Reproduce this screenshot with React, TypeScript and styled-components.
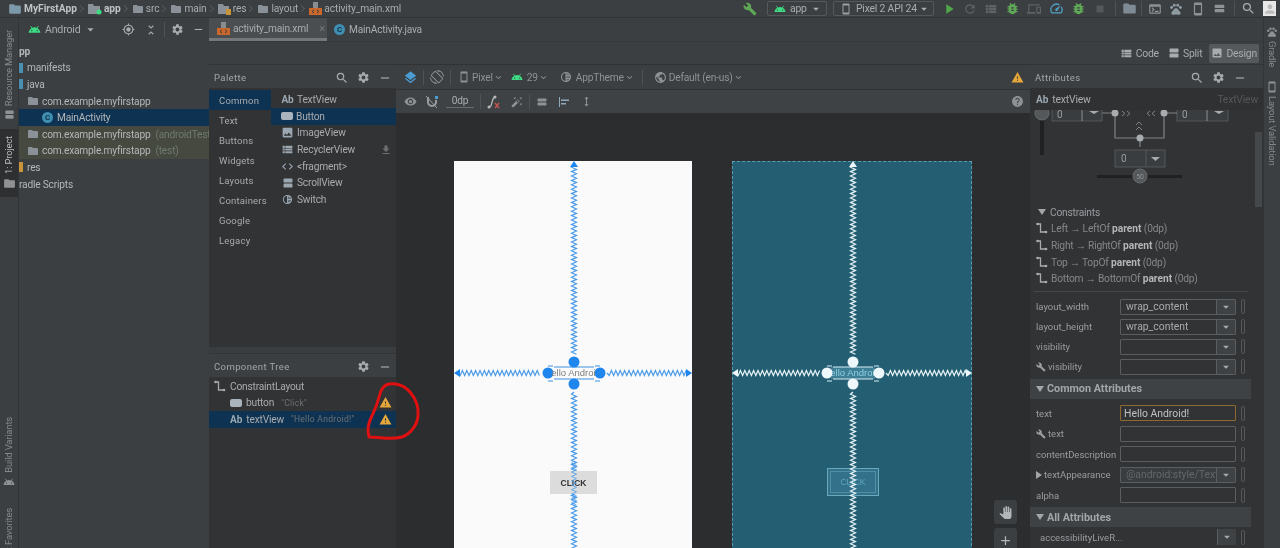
import React from 'react';
import styled, { createGlobalStyle } from 'styled-components';
import {
  MdAdd, MdAndroid, MdArrowDropDown, MdAutoFixHigh, MdBugReport, MdBuild, MdFileDownload, MdFolder,
  MdGpsFixed, MdHelp, MdImage, MdKeyboardArrowDown, MdLayers, MdPanTool, MdPerson, MdPlayArrow, MdPublic,
  MdRemove, MdScreenRotation, MdSearch, MdSettings, MdSmartphone, MdSpeed, MdStop, MdUnfoldLess,
  MdViewList, MdVisibility, MdRefresh, MdDevices, MdTerminal, MdPets, MdCode, MdViewAgenda, MdWarning,
  MdTonality, MdAlignHorizontalLeft, MdHeight, MdViewStream,
} from 'react-icons/md';

const GlobalStyle = createGlobalStyle`
  html, body { margin: 0; padding: 0; background: #3c3f41; }
  * { box-sizing: border-box; }
  svg { flex-shrink: 0; }
`;

const Root = styled.div`
  position: relative;
  width: 1280px;
  height: 548px;
  overflow: hidden;
  display: flex;
  flex-direction: column;
  background: #3c3f41;
  color: #b4b7b9;
  font-family: Roboto, "Noto Sans", sans-serif;
  font-size: 10.2px;
  letter-spacing: -0.2px;
  filter: blur(0.3px);
`;

const TopBar = styled.div`
  height: 18px;
  flex: none;
  display: flex;
  align-items: center;
  justify-content: space-between;
  padding: 0 0 0 8px;
  border-bottom: 1px solid #323232;
  white-space: nowrap;
`;
const Crumbs = styled.div`
  display: flex;
  align-items: center;
  height: 100%;
`;
const Crumb = styled.span<{ $bold?: boolean }>`
  display: inline-flex;
  align-items: center;
  gap: 2px;
  font-weight: ${p => (p.$bold ? 700 : 400)};
  letter-spacing: ${p => (p.$bold ? '0' : '-0.1px')};
  color: ${p => (p.$bold ? '#bfc2c4' : '#a9acae')};
`;
const CrumbSep = styled.span`
  width: 5px;
  height: 5px;
  margin: 0 5px 0 1px;
  border-top: 1px solid #55585a;
  border-right: 1px solid #55585a;
  transform: rotate(45deg);
`;
const RunTools = styled.div`
  display: flex;
  align-items: center;
  height: 100%;
  padding-right: 4px;
`;
const Slot = styled.span<{ $w: number; $c?: string }>`
  width: ${p => p.$w}px;
  display: inline-flex;
  justify-content: center;
  align-items: center;
  color: ${p => p.$c ?? '#5f6365'};
`;
const Combo = styled.div<{ $w: number; $mr: number }>`
  width: ${p => p.$w}px;
  height: 15px;
  margin-right: ${p => p.$mr}px;
  display: flex;
  align-items: center;
  justify-content: space-between;
  padding: 0 3px 0 6px;
  border: 1px solid #55585a;
  border-radius: 2px;
  color: #a9acae;
  font-size: 10.4px;
`;
const ComboLabel = styled.span`
  display: inline-flex;
  align-items: center;
  gap: 4px;
`;
const UserBox = styled.span`
  width: 13px;
  height: 15px;
  margin-left: 7px;
  display: inline-flex;
  align-items: flex-end;
  justify-content: center;
  background: #e8e8e8;
  color: #fff;
  overflow: hidden;
`;
const VLine = styled.span<{ $h?: number; $mx?: number }>`
  width: 1px;
  height: ${p => p.$h ?? 15}px;
  margin: 0 ${p => p.$mx ?? 6}px;
  background: #505355;
  flex: none;
`;

const Body = styled.div`
  flex: 1;
  min-height: 0;
  display: flex;
`;

const Rail = styled.div<{ $right?: boolean }>`
  width: ${p => (p.$right ? 17 : 19)}px;
  flex: none;
  display: flex;
  flex-direction: column;
  align-items: center;
  background: #3c3f41;
  border-${p => (p.$right ? 'left' : 'right')}: 1px solid #323436;
  overflow: hidden;
`;
const RailTab = styled.div<{ $active?: boolean; $right?: boolean; $mt?: number; $h?: number; $pt?: number }>`
  width: 100%;
  flex: none;
  height: ${p => (p.$h ? `${p.$h}px` : 'auto')};
  margin-top: ${p => p.$mt ?? 0}px;
  padding-top: ${p => p.$pt ?? 0}px;
  display: flex;
  flex-direction: ${p => (p.$right ? 'column-reverse' : 'column')};
  align-items: center;
  justify-content: ${p => (p.$active ? 'center' : p.$right ? 'flex-end' : 'flex-start')};
  gap: 3px;
  background: ${p => (p.$active ? '#2d2f31' : 'transparent')};
  color: #8f9294;
`;
const RailText = styled.span<{ $right?: boolean; $active?: boolean }>`
  writing-mode: vertical-rl;
  transform: ${p => (p.$right ? 'none' : 'rotate(180deg)')};
  white-space: nowrap;
  font-size: 9.5px;
  letter-spacing: -0.2px;
  line-height: 12px;
  color: ${p => (p.$active ? '#b8bbbd' : '#85888a')};
`;

const ProjectPane = styled.div`
  width: 190px;
  flex: none;
  display: flex;
  flex-direction: column;
  overflow: hidden;
`;
const PaneHead = styled.div`
  height: 23px;
  flex: none;
  display: flex;
  align-items: center;
  padding-left: 9px;
  color: #a9acae;
`;
const PaneTitle = styled.span`
  margin-left: 4px;
  font-size: 10.6px;
`;
const TreeRow = styled.div<{ $indent?: number; $bg?: string }>`
  height: 16.6px;
  display: flex;
  align-items: center;
  gap: 3px;
  padding-left: ${p => p.$indent ?? 0}px;
  background: ${p => p.$bg ?? 'transparent'};
  white-space: nowrap;
  color: #b4b7b9;
  overflow: hidden;
`;
const Muted = styled.span<{ $c?: string }>`
  margin-left: 2px;
  color: ${p => p.$c ?? '#6f7a6d'};
`;
const ClassDot = styled.span`
  width: 11px;
  height: 11px;
  margin-right: 1px;
  flex: none;
  border-radius: 50%;
  background: #3f8fb3;
  color: #123246;
  font-size: 8px;
  font-weight: 700;
  line-height: 11px;
  text-align: center;
`;
const Stub = styled.span<{ $c: string }>`
  width: 4px;
  height: 10px;
  margin-right: 1px;
  flex: none;
  background: ${p => p.$c};
`;

const Editor = styled.div`
  flex: 1;
  min-width: 0;
  display: flex;
  flex-direction: column;
`;
const Tabs = styled.div`
  height: 23px;
  flex: none;
  display: flex;
`;
const Tab = styled.div<{ $active?: boolean }>`
  width: ${p => (p.$active ? 118 : 120)}px;
  display: flex;
  align-items: center;
  gap: 3px;
  padding: 0 0 0 ${p => (p.$active ? 8 : 7)}px;
  background: ${p => (p.$active ? '#4b4e50' : 'transparent')};
  border-bottom: ${p => (p.$active ? '3px solid #74787a' : 'none')};
  color: #a9acae;
`;
const Close = styled.span`
  margin-left: 8px;
  color: #73777a;
  font-size: 11px;
`;
const ModeRow = styled.div`
  height: 23px;
  flex: none;
  display: flex;
  align-items: center;
  justify-content: flex-end;
  gap: 5px;
  padding-right: 4px;
  border-top: 1px solid #36383a;
`;
const Mode = styled.span<{ $active?: boolean }>`
  height: 19px;
  display: inline-flex;
  align-items: center;
  gap: 3px;
  padding: 0 2px;
  border-radius: 2px;
  background: ${p => (p.$active ? '#55595b' : 'transparent')};
  color: #a9acae;
  font-size: 10.4px;
`;

const DesignArea = styled.div`
  flex: 1;
  min-height: 0;
  display: flex;
`;
const LeftColumn = styled.div`
  width: 187px;
  flex: none;
  display: flex;
  flex-direction: column;
  background: #313335;
`;
const SectionHead = styled.div<{ $h?: number }>`
  height: ${p => p.$h ?? 24}px;
  flex: none;
  display: flex;
  align-items: center;
  justify-content: space-between;
  padding: 2px 4px 0 5px;
  background: #3c3f41;
  border-top: 1px solid #323436;
  font-size: 9.5px;
  letter-spacing: 0.4px;
  color: #a3a6a8;
`;
const HeadIcons = styled.span`
  display: inline-flex;
  align-items: center;
  gap: 8px;
  color: #a9acae;
`;
const PaletteBody = styled.div`
  flex: 1;
  display: grid;
  grid-template-columns: 62px 1fr;
  align-content: start;
`;
const CategoryList = styled.div`
  padding-top: 2px;
`;
const WidgetList = styled.div`
  padding-top: 3.5px;
`;
const Category = styled.div<{ $active?: boolean }>`
  height: 20px;
  line-height: 21px;
  padding-left: 10px;
  font-size: 9.5px;
  letter-spacing: 0.2px;
  background: ${p => (p.$active ? '#0d3252' : 'transparent')};
  color: #a9acae;
`;
const Widget = styled.div<{ $active?: boolean }>`
  height: 16.6px;
  display: flex;
  align-items: center;
  gap: 3px;
  padding: 0 4px 0 10px;
  background: ${p => (p.$active ? '#0d3252' : 'transparent')};
  color: #a9acae;
  white-space: nowrap;
`;
const WidgetGlyph = styled.span`
  width: 13px;
  flex: none;
  display: inline-flex;
  justify-content: center;
  align-items: center;
  color: #9aa7b1;
  font-weight: 700;
  font-size: 10px;
`;
const ButtonGlyph = styled.span`
  width: 12px;
  height: 8px;
  flex: none;
  border-radius: 2px;
  background: #a9b4bd;
`;
const Grow = styled.span`
  flex: 1;
`;
const TreePane = styled.div`
  height: 201px;
  flex: none;
  display: flex;
  flex-direction: column;
`;
const TreeStrip = styled.div`
  height: 6px;
  flex: none;
  background: #3a3d3f;
`;
const CompList = styled.div`
  padding-top: 1px;
`;
const CompRow = styled.div<{ $active?: boolean; $indent: number }>`
  height: 16.6px;
  display: flex;
  align-items: center;
  gap: 4px;
  padding: 0 4px 0 ${p => p.$indent}px;
  background: ${p => (p.$active ? '#0d3252' : 'transparent')};
  white-space: nowrap;
  color: #a9acae;
`;
const CompHint = styled.span`
  margin-left: 3px;
  font-size: 8.5px;
  letter-spacing: 0.3px;
  color: #6e7174;
`;

const CanvasColumn = styled.div`
  flex: 1;
  min-width: 0;
  display: flex;
  flex-direction: column;
  background: #2b2d2f;
`;
const CanvasBar = styled.div<{ $h: number; $bg: string }>`
  height: ${p => p.$h}px;
  flex: none;
  display: flex;
  align-items: center;
  padding: 0 6px;
  background: ${p => p.$bg};
  border-top: 1px solid #303234;
  color: #8f9294;
  font-size: 10.2px;
  white-space: nowrap;
`;
const BarItem = styled.span<{ $w?: number; $c?: string; $ml?: number }>`
  ${p => (p.$w ? `width: ${p.$w}px;` : '')}
  margin-left: ${p => p.$ml ?? 0}px;
  flex: none;
  display: inline-flex;
  align-items: center;
  justify-content: center;
  gap: 2px;
  color: ${p => p.$c ?? '#8f9294'};
`;
const Dp = styled.span`
  width: 28px;
  margin-left: 3px;
  text-align: center;
  border-bottom: 1px solid #6a6d6f;
  color: #a9acae;
  line-height: 12px;
`;
const Stage = styled.div`
  position: relative;
  flex: 1;
  overflow: hidden;
`;
const Device = styled.div<{ $left: number; $w: number; $blue?: boolean }>`
  position: absolute;
  left: ${p => p.$left}px;
  top: 48px;
  width: ${p => p.$w}px;
  height: 400px;
  background: ${p => (p.$blue ? '#245e73' : '#fafafa')};
  ${p => (p.$blue ? 'outline: 1px dashed #5c9bb0; outline-offset: -1px;' : '')}
`;
const Lines = styled.svg`
  position: absolute;
  inset: 0;
`;
const HelloBox = styled.div<{ $blue?: boolean }>`
  position: absolute;
  left: ${p => (p.$blue ? 99 : 98)}px;
  top: 206px;
  width: 44px;
  height: 12px;
  overflow: hidden;
  display: flex;
  justify-content: center;
  white-space: nowrap;
  font-family: "Liberation Sans", sans-serif;
  font-size: 9.5px;
  letter-spacing: 0;
  line-height: 12px;
  background: ${p => (p.$blue ? '#3f7f96' : 'transparent')};
  color: ${p => (p.$blue ? '#8fd0e3' : '#7d7d7d')};
`;
const ClickButton = styled.div<{ $blue?: boolean }>`
  position: absolute;
  left: ${p => (p.$blue ? 95 : 96)}px;
  top: ${p => (p.$blue ? 307 : 310)}px;
  width: ${p => (p.$blue ? 52 : 47)}px;
  height: ${p => (p.$blue ? 28 : 23)}px;
  display: flex;
  align-items: center;
  justify-content: center;
  font-family: "Liberation Sans", sans-serif;
  font-size: 8.5px;
  letter-spacing: 0;
  font-weight: ${p => (p.$blue ? 400 : 700)};
  background: ${p => (p.$blue ? '#33708a' : '#dcdcdc')};
  border: ${p => (p.$blue ? '1px solid #6ba8bb' : 'none')};
  box-shadow: ${p => (p.$blue ? 'inset 0 0 0 2px #33708a, inset 0 0 0 3px #4f90a5' : 'none')};
  color: ${p => (p.$blue ? '#5fa8bd' : '#333')};
`;
const FloatBtn = styled.div<{ $top: number }>`
  position: absolute;
  right: 13px;
  top: ${p => p.$top}px;
  width: 23px;
  height: 24px;
  display: flex;
  align-items: center;
  justify-content: center;
  border-radius: 3px;
  background: #3c3f41;
  color: #b4b7b9;
`;

const AttrPane = styled.div`
  position: relative;
  width: 233px;
  flex: none;
  display: flex;
  flex-direction: column;
  background: #313335;
  overflow: hidden;
`;
const AttrIcons = styled(HeadIcons)`
  margin-right: 12px;
`;
const SelectedHead = styled.div`
  height: 22px;
  flex: none;
  display: flex;
  align-items: center;
  justify-content: space-between;
  padding: 0 5px 0 6px;
  background: #2f3133;
  color: #a9acae;
  font-size: 10.4px;
`;
const AbGlyph = styled.b<{ $flush?: boolean }>`
  margin-right: ${p => (p.$flush ? 0 : 4)}px;
  font-size: 10px;
  letter-spacing: 0;
  color: #9aa7b1;
`;
const SelectedType = styled.span`
  color: #55585a;
  font-size: 10.4px;
`;
const WidgetArea = styled.svg`
  flex: none;
  display: block;
`;
const ConstraintHead = styled.div`
  height: 16.6px;
  display: flex;
  align-items: center;
  gap: 4px;
  padding-left: 8px;
  color: #9a9da0;
`;
const ConstraintRow = styled.div`
  height: 16.6px;
  display: flex;
  align-items: center;
  gap: 3px;
  padding-left: 6px;
  color: #85888a;
  white-space: nowrap;
`;
const Parent = styled.b`
  letter-spacing: 0;
  color: #b4b7b9;
`;
const Rule = styled.div`
  height: 1px;
  width: 214px;
  margin: 4px 0 5px 4px;
  flex: none;
  background: #45484a;
`;
const AttrRow = styled.div<{ $h?: number; $mt?: number }>`
  height: ${p => p.$h ?? 20}px;
  margin-top: ${p => p.$mt ?? 0}px;
  flex: none;
  display: grid;
  grid-template-columns: 84px 116px 14px;
  align-items: center;
  padding-left: 6px;
  color: #9a9da0;
  letter-spacing: 0;
  font-size: 9.5px;
  white-space: nowrap;
`;
const AttrLabel = styled.span<{ $indent?: number }>`
  display: inline-flex;
  align-items: center;
  gap: 2px;
  margin-left: ${p => p.$indent ?? 0}px;
`;
const Field = styled.div<{ $focus?: boolean; $dim?: boolean; $bare?: boolean }>`
  height: 16px;
  display: flex;
  align-items: center;
  justify-content: space-between;
  padding-left: ${p => (p.$focus ? 3 : 5)}px;
  border: ${p => (p.$focus ? '1.5px solid #8c6a32' : p.$bare ? 'none' : '1px solid #5b5e60')};
  border-radius: 1px;
  color: ${p => (p.$dim ? '#646769' : p.$focus ? '#bfc2c4' : '#a9acae')};
  font-size: 10.4px;
  overflow: hidden;
  background: ${p => (p.$dim ? '#3a3d3f' : 'transparent')};
`;
const FieldText = styled.span`
  flex: 1;
  min-width: 0;
  overflow: hidden;
`;
const FieldArrow = styled.span`
  width: 19px;
  height: 100%;
  flex: none;
  display: flex;
  align-items: center;
  justify-content: center;
  background: #3f4244;
  border-left: 1px solid #5b5e60;
  color: #a9acae;
`;
const Bracket = styled.span`
  width: 4px;
  height: 15px;
  margin-left: 5px;
  border: 1px solid #55585a;
  border-radius: 2px;
`;
const SectionBar = styled.div`
  height: 20px;
  width: 221px;
  flex: none;
  display: flex;
  align-items: center;
  gap: 3px;
  padding-left: 6px;
  margin-top: 2px;
  background: #3f4244;
  color: #a3a6a8;
  font-weight: 700;
  letter-spacing: 0;
  font-size: 10.8px;
`;
const Triangle = styled.span<{ $right?: boolean }>`
  width: 0;
  height: 0;
  flex: none;
  ${p =>
    p.$right
      ? 'border-top: 4px solid transparent; border-bottom: 4px solid transparent; border-left: 6px solid #a3a6a8;'
      : 'border-left: 4px solid transparent; border-right: 4px solid transparent; border-top: 6px solid #a3a6a8;'}
`;
const Scrollbar = styled.div`
  position: absolute;
  left: 225px;
  top: 68px;
  width: 7px;
  height: 75px;
  background: #45484a;
`;
const RedCircle = styled.svg`
  position: absolute;
  left: 0;
  top: 0;
  pointer-events: none;
`;

// zigzag between two points, for the constraint springs of the blueprint
const zig = (x1: number, y1: number, x2: number, y2: number) => {
  const len = Math.hypot(x2 - x1, y2 - y1);
  const ux = (x2 - x1) / len;
  const uy = (y2 - y1) / len;
  let d = `M${x1} ${y1}`;
  const n = Math.floor(len / 2.2);
  for (let i = 1; i <= n; i++) {
    const t = i * 2.2;
    const s = i % 2 ? 2.5 : -2.5;
    d += `L${(x1 + ux * t - uy * s).toFixed(1)} ${(y1 + uy * t + ux * s).toFixed(1)}`;
  }
  return d;
};

const ConstraintIcon = ({ c = '#a9acae' }: { c?: string }) => (
  <svg width="12" height="13" viewBox="0 0 12 13">
    <path d="M1 2h3.5v8H10" fill="none" stroke={c} strokeWidth="1.3" />
    <circle cx="1.5" cy="2" r="1.3" fill={c} />
    <circle cx="10" cy="10" r="1.3" fill={c} />
  </svg>
);

const XmlIcon = () => (
  <svg width="13" height="13" viewBox="0 0 13 13">
    <path d="M4 0h5v6H4z" fill="#8b8e90" />
    <path d="M0 6h13v7H0z" fill="#c9682a" />
    <path d="M5 8l-2 1.5L5 11M8 8l2 1.5L8 11" fill="none" stroke="#3c3f41" strokeWidth="1" />
  </svg>
);

const ResFolder = () => (
  <svg width="13" height="12" viewBox="0 0 13 12">
    <path d="M0 1h5l1 2h5v8H0z" fill="#8a9199" />
    <path d="M8 6h5v6H8z" fill="#c9953a" />
  </svg>
);

const AppFolder = () => (
  <svg width="14" height="12" viewBox="0 0 14 12">
    <path d="M0 1h5l1 2h6v8H0z" fill="#8a9199" />
    <circle cx="11" cy="9" r="2.500" fill="#3ddc84" />
  </svg>
);

const MagnetIcon = () => (
  <svg width="14" height="14" viewBox="0 0 14 14">
    <path d="M3 2v5a4 4 0 0 0 8 0V5" fill="none" stroke="#9a9da0" strokeWidth="2" />
    <path d="M1 1l11 12" stroke="#9a9da0" strokeWidth="1" />
    <path d="M10 1h3v3h-3z" fill="#4a9bd1" />
  </svg>
);

const NoPathIcon = () => (
  <svg width="14" height="14" viewBox="0 0 14 14">
    <path d="M2 12c4 0 2-9 6-10" fill="none" stroke="#b4b7b9" strokeWidth="1.300" />
    <circle cx="2" cy="12" r="1.500" fill="#b4b7b9" />
    <circle cx="8" cy="2" r="1.500" fill="#b4b7b9" />
    <path d="M8 8l4 5M12 8l-4 5" stroke="#c75450" strokeWidth="1.300" />
  </svg>
);

const Warn = ({ size = 13 }: { size?: number }) => <MdWarning size={size} color="#e5a63a" />;

const Blueprint = ({ cx, w, stroke, blue }: { cx: number; w: number; stroke: string; blue?: boolean }) => {
  const cy = 212;
  const dot = blue ? '#eef8fb' : '#1f86ee';
  const handle = blue ? '#d9eef5' : '#3b8fe0';
  return (
    <Lines width={w} height={400} viewBox={`0 0 ${w} 400`}>
      <path d={zig(cx, 4, cx, cy - 18)} fill="none" stroke={stroke} strokeWidth="1.2" />
      <path d={zig(cx, cy + 19, cx, 390)} fill="none" stroke={stroke} strokeWidth="1.2" />
      <path d={zig(4, cy, cx - 33, cy)} fill="none" stroke={stroke} strokeWidth="1.2" />
      <path d={zig(cx + 33, cy, w - 4, cy)} fill="none" stroke={stroke} strokeWidth="1.2" />
      <path d={`M${cx} 0l-4 6h8z`} fill={dot} />
      <path d={`M0 ${cy}l6 -4v8z`} fill={dot} />
      <path d={`M${w} ${cy}l-6 -4v8z`} fill={dot} />
      <path
        d={`M${cx - 26} ${cy - 7}h5M${cx + 21} ${cy - 7}h5M${cx - 26} ${cy + 8}h5M${cx + 21} ${cy + 8}h5M${cx - 20} ${cy - 6}h40M${cx - 20} ${cy + 6}h40`}
        fill="none"
        stroke={handle}
        strokeWidth="1.200"
      />
      <circle cx={cx} cy={cy - 11} r="5.5" fill={dot} />
      <circle cx={cx} cy={cy + 11} r="5.5" fill={dot} />
      <circle cx={cx - 26} cy={cy} r="5.5" fill={dot} />
      <circle cx={cx + 26} cy={cy} r="5.5" fill={dot} />
    </Lines>
  );
};

const dropArrow = <FieldArrow><MdArrowDropDown size={14} /></FieldArrow>;

const App: React.FC = () => (
  <Root>
    <GlobalStyle />
    <TopBar>
      <Crumbs>
        <Crumb $bold><MdFolder size={14} color="#7d98a8" />MyFirstApp</Crumb><CrumbSep />
        <Crumb $bold><AppFolder />app</Crumb><CrumbSep />
        <Crumb><MdFolder size={12} color="#8a9199" />src</Crumb><CrumbSep />
        <Crumb><MdFolder size={12} color="#8a9199" />main</Crumb><CrumbSep />
        <Crumb><ResFolder />res</Crumb><CrumbSep />
        <Crumb><MdFolder size={12} color="#8a9199" />layout</Crumb><CrumbSep />
        <Crumb><XmlIcon />activity_main.xml</Crumb>
      </Crumbs>
      <RunTools>
        <Slot $w={34} $c="#5fa857"><MdBuild size={14} /></Slot>
        <Combo $w={60} $mr={6}>
          <ComboLabel><MdAndroid size={12} color="#3ddc84" />app</ComboLabel>
          <MdArrowDropDown size={14} />
        </Combo>
        <Combo $w={101} $mr={4}>
          <ComboLabel><MdSmartphone size={12} color="#9a9da0" />Pixel 2 API 24</ComboLabel>
          <MdArrowDropDown size={14} />
        </Combo>
        <Slot $w={21} $c="#4ea84a"><MdPlayArrow size={16} /></Slot>
        <Slot $w={21}><MdRefresh size={14} /></Slot>
        <Slot $w={22}><MdViewList size={14} /></Slot>
        <Slot $w={21} $c="#5fa857"><MdBugReport size={15} /></Slot>
        <Slot $w={22}><MdDevices size={14} /></Slot>
        <Slot $w={22} $c="#4f9fc4"><MdSpeed size={15} /></Slot>
        <Slot $w={22} $c="#5fa857"><MdBugReport size={15} /></Slot>
        <Slot $w={22} $c="#55585a"><MdStop size={14} /></Slot>
        <VLine $mx={4} />
        <Slot $w={18} $c="#7e8a94"><MdFolder size={15} /></Slot>
        <VLine $mx={3} />
        <Slot $w={20} $c="#8f9294"><MdTerminal size={14} /></Slot>
        <Slot $w={22} $c="#8f9ba3"><MdPets size={14} /></Slot>
        <Slot $w={22} $c="#8f9294"><MdSmartphone size={14} /></Slot>
        <Slot $w={20} $c="#8f9294"><MdViewStream size={13} /></Slot>
        <VLine $mx={5} />
        <Slot $w={16} $c="#a9acae"><MdSearch size={15} /></Slot>
        <UserBox><MdPerson size={14} color="#bbb" /></UserBox>
      </RunTools>
    </TopBar>

    <Body>
      <Rail>
        <RailTab $h={111} $pt={12}>
          <RailText>Resource Manager</RailText>
          <MdViewAgenda size={11} />
        </RailTab>
        <RailTab $active $h={68}>
          <RailText $active>1: Project</RailText>
          <MdFolder size={13} />
        </RailTab>
        <RailTab $mt={220}>
          <RailText>Build Variants</RailText>
          <MdAndroid size={12} />
        </RailTab>
        <RailTab $mt={20}>
          <RailText>2: Favorites</RailText>
        </RailTab>
      </Rail>

      <ProjectPane>
        <PaneHead>
          <MdAndroid size={13} color="#3ddc84" />
          <PaneTitle>Android</PaneTitle>
          <MdArrowDropDown size={15} style={{ marginLeft: 3 }} />
          <Grow />
          <MdGpsFixed size={13} />
          <MdUnfoldLess size={14} style={{ marginLeft: 9 }} />
          <VLine $mx={6} />
          <MdSettings size={13} />
          <MdRemove size={13} style={{ marginLeft: 8, marginRight: 4 }} />
        </PaneHead>
        <TreeRow style={{ marginTop: 2 }}><b>pp</b></TreeRow>
        <TreeRow><Stub $c="#4a8fb0" />manifests</TreeRow>
        <TreeRow><Stub $c="#4a8fb0" />java</TreeRow>
        <TreeRow $indent={8}><MdFolder size={12} color="#8a9199" />com.example.myfirstapp</TreeRow>
        <TreeRow $indent={23} $bg="#0d3252"><ClassDot>C</ClassDot>MainActivity</TreeRow>
        <TreeRow $indent={8} $bg="#45493f">
          <MdFolder size={12} color="#8a9199" />com.example.myfirstapp<Muted>(androidTest)</Muted>
        </TreeRow>
        <TreeRow $indent={8} $bg="#45493f">
          <MdFolder size={12} color="#8a9199" />com.example.myfirstapp<Muted>(test)</Muted>
        </TreeRow>
        <TreeRow><Stub $c="#c9953a" />res</TreeRow>
        <TreeRow>radle Scripts</TreeRow>
      </ProjectPane>

      <Editor>
        <Tabs>
          <Tab $active><XmlIcon />activity_main.xml<Close>×</Close></Tab>
          <Tab><ClassDot>C</ClassDot>MainActivity.java</Tab>
        </Tabs>
        <ModeRow>
          <Mode><MdViewList size={13} />Code</Mode>
          <Mode><MdViewAgenda size={12} />Split</Mode>
          <Mode $active><MdImage size={12} />Design</Mode>
        </ModeRow>
        <DesignArea>
          <LeftColumn>
            <SectionHead>
              Palette
              <HeadIcons><MdSearch size={14} /><MdSettings size={13} /><MdRemove size={14} /></HeadIcons>
            </SectionHead>
            <PaletteBody>
              <CategoryList>
                <Category $active>Common</Category>
                <Category>Text</Category>
                <Category>Buttons</Category>
                <Category>Widgets</Category>
                <Category>Layouts</Category>
                <Category>Containers</Category>
                <Category>Google</Category>
                <Category>Legacy</Category>
              </CategoryList>
              <WidgetList>
                <Widget><WidgetGlyph>Ab</WidgetGlyph>TextView</Widget>
                <Widget $active><ButtonGlyph />Button</Widget>
                <Widget><WidgetGlyph><MdImage size={13} /></WidgetGlyph>ImageView</Widget>
                <Widget><WidgetGlyph><MdViewList size={13} /></WidgetGlyph>RecyclerView<Grow /><MdFileDownload size={12} color="#6e7174" /></Widget>
                <Widget><WidgetGlyph><MdCode size={13} /></WidgetGlyph>&lt;fragment&gt;</Widget>
                <Widget><WidgetGlyph><MdViewAgenda size={12} /></WidgetGlyph>ScrollView</Widget>
                <Widget><WidgetGlyph><MdTonality size={11} /></WidgetGlyph>Switch</Widget>
              </WidgetList>
            </PaletteBody>
            <TreePane>
              <TreeStrip />
              <SectionHead $h={24}>
                Component Tree
                <HeadIcons><MdSettings size={13} /><MdRemove size={14} /></HeadIcons>
              </SectionHead>
              <CompList>
                <CompRow $indent={5}><ConstraintIcon /><span>ConstraintLayout</span></CompRow>
                <CompRow $indent={21}>
                  <ButtonGlyph />button<CompHint>"Click"</CompHint><Grow /><Warn />
                </CompRow>
                <CompRow $active $indent={21}>
                  <AbGlyph $flush>Ab</AbGlyph>textView<CompHint>"Hello Android!"</CompHint><Grow /><Warn />
                </CompRow>
              </CompList>
            </TreePane>
          </LeftColumn>

          <CanvasColumn>
            <CanvasBar $h={25} $bg="#3c3f41">
              <BarItem $w={16} $c="#4a9bd1"><MdLayers size={15} /></BarItem>
              <VLine $mx={5} />
              <BarItem $w={16}><MdScreenRotation size={14} /></BarItem>
              <VLine $mx={5} />
              <BarItem $w={16}><MdSmartphone size={12} /></BarItem>
              Pixel<MdKeyboardArrowDown size={11} />
              <BarItem $w={19} $c="#3ddc84" $ml={4}><MdAndroid size={12} /></BarItem>
              29<MdKeyboardArrowDown size={11} />
              <BarItem $w={20} $ml={7}><MdTonality size={12} /></BarItem>
              AppTheme<MdKeyboardArrowDown size={11} />
              <VLine $mx={7} />
              <BarItem $w={16} $ml={3}><MdPublic size={13} /></BarItem>
              Default (en-us)<MdKeyboardArrowDown size={11} />
              <Grow />
              <Warn />
            </CanvasBar>
            <CanvasBar $h={24} $bg="#3f4244">
              <BarItem $w={16}><MdVisibility size={13} /></BarItem>
              <BarItem $w={22} $ml={3}><MagnetIcon /></BarItem>
              <Dp>0dp</Dp>
              <VLine $mx={6} />
              <BarItem $w={14}><NoPathIcon /></BarItem>
              <BarItem $w={16} $ml={8}><MdAutoFixHigh size={12} /></BarItem>
              <VLine $mx={4} />
              <BarItem $w={16}><MdViewStream size={12} /></BarItem>
              <BarItem $w={16} $ml={6}><MdAlignHorizontalLeft size={12} color="#8fa9bb" /></BarItem>
              <BarItem $w={16} $ml={6}><MdHeight size={13} /></BarItem>
              <Grow />
              <MdHelp size={13} />
            </CanvasBar>
            <Stage>
              <Device $left={58} $w={238}>
                <Blueprint cx={120} w={238} stroke="#4b9be8" />
                <HelloBox>Hello Android!</HelloBox>
                <ClickButton>CLICK</ClickButton>
                <Lines width={238} height={400}>
                  <path d={zig(120, 300, 120, 345)} fill="none" stroke="#4b9be8" strokeWidth="1" opacity="0.8" />
                </Lines>
              </Device>
              <Device $left={336} $w={240} $blue>
                <ClickButton $blue>CLICK</ClickButton>
                <HelloBox $blue>Hello Android!</HelloBox>
                <Blueprint cx={121} w={240} stroke="#e6f3f7" blue />
              </Device>
              <FloatBtn $top={387}><MdPanTool size={13} /></FloatBtn>
              <FloatBtn $top={415}><MdAdd size={15} /></FloatBtn>
            </Stage>
          </CanvasColumn>

          <AttrPane>
            <SectionHead>
              Attributes
              <AttrIcons><MdSearch size={14} /><MdSettings size={13} /><MdRemove size={14} /></AttrIcons>
            </SectionHead>
            <SelectedHead>
              <span><AbGlyph>Ab</AbGlyph>textView</span>
              <SelectedType>TextView</SelectedType>
            </SelectedHead>
            <WidgetArea width="233" height="94" viewBox="0 0 233 94">
              <rect x="10" y="0" width="4" height="45" fill="#1f2122" />
              <circle cx="12" cy="3" r="7" fill="#55585a" stroke="#6a6d6f" />
              <rect x="22" y="-4" width="50" height="15" fill="#3a3d3f" stroke="#55585a" />
              <rect x="147" y="-4" width="51" height="15" fill="#3a3d3f" stroke="#55585a" />
              <text x="27" y="8" fontSize="10" fill="#9a9da0">0</text>
              <text x="152" y="8" fontSize="10" fill="#9a9da0">0</text>
              <path d="M72 3h13v25h49V3h13M110 28v9M52 -4v15M177 -4v15" fill="none" stroke="#808386" strokeWidth="1.2" />
              <path d="M59 1l5 3 5 -3M184 1l5 3 5 -3" fill="#a9acae" />
              <circle cx="85" cy="3" r="3.5" fill="#a9acae" />
              <circle cx="134" cy="3" r="3.5" fill="#a9acae" />
              <circle cx="110" cy="28" r="3.5" fill="#a9acae" />
              <path d="M92 1l3 2.5-3 2.5M97 1l3 2.5-3 2.5M125 1l-3 2.5 3 2.5M120 1l-3 2.5 3 2.5M106 15l3-3 3 3M106 20l3-3 3 3" fill="none" stroke="#808386" />
              <rect x="85" y="40" width="50" height="17" fill="#3a3d3f" stroke="#55585a" />
              <path d="M116 40v17" stroke="#55585a" />
              <text x="91" y="52" fontSize="10" fill="#9a9da0">0</text>
              <path d="M121 47h9l-4.500 4z" fill="#a9acae" />
              <rect x="67" y="65" width="85" height="3" fill="#1f2122" />
              <circle cx="110" cy="66" r="7" fill="#55585a" stroke="#6a6d6f" />
              <text x="110" y="69" fontSize="7" fill="#8f9294" textAnchor="middle">50</text>
            </WidgetArea>
            <ConstraintHead><Triangle />Constraints</ConstraintHead>
            <ConstraintRow><ConstraintIcon /><span>Left → LeftOf <Parent>parent</Parent> (0dp)</span></ConstraintRow>
            <ConstraintRow><ConstraintIcon /><span>Right → RightOf <Parent>parent</Parent> (0dp)</span></ConstraintRow>
            <ConstraintRow><ConstraintIcon /><span>Top → TopOf <Parent>parent</Parent> (0dp)</span></ConstraintRow>
            <ConstraintRow><ConstraintIcon /><span>Bottom → BottomOf <Parent>parent</Parent> (0dp)</span></ConstraintRow>
            <Rule />
            <AttrRow>
              <AttrLabel>layout_width</AttrLabel>
              <Field><FieldText>wrap_content</FieldText>{dropArrow}</Field>
              <Bracket />
            </AttrRow>
            <AttrRow>
              <AttrLabel>layout_height</AttrLabel>
              <Field><FieldText>wrap_content</FieldText>{dropArrow}</Field>
              <Bracket />
            </AttrRow>
            <AttrRow>
              <AttrLabel>visibility</AttrLabel>
              <Field><FieldText />{dropArrow}</Field>
              <Bracket />
            </AttrRow>
            <AttrRow>
              <AttrLabel><MdBuild size={10} />visibility</AttrLabel>
              <Field><FieldText />{dropArrow}</Field>
              <Bracket />
            </AttrRow>
            <SectionBar><Triangle />Common Attributes</SectionBar>
            <AttrRow $h={20.5} $mt={4}>
              <AttrLabel>text</AttrLabel>
              <Field $focus>Hello Android!</Field>
              <Bracket />
            </AttrRow>
            <AttrRow $h={20.5}>
              <AttrLabel><MdBuild size={10} />text</AttrLabel>
              <Field />
              <Bracket />
            </AttrRow>
            <AttrRow $h={20.5}>
              <AttrLabel>contentDescription</AttrLabel>
              <Field />
              <Bracket />
            </AttrRow>
            <AttrRow $h={20.5}>
              <AttrLabel><Triangle $right />textAppearance</AttrLabel>
              <Field $dim><FieldText>@android:style/TextAppearance</FieldText>{dropArrow}</Field>
              <Bracket />
            </AttrRow>
            <AttrRow $h={20.5}>
              <AttrLabel>alpha</AttrLabel>
              <Field />
              <Bracket />
            </AttrRow>
            <SectionBar><Triangle />All Attributes</SectionBar>
            <AttrRow>
              <AttrLabel $indent={4}>accessibilityLiveR...</AttrLabel>
              <Field $bare><FieldText />{dropArrow}</Field>
              <Bracket />
            </AttrRow>
            <Scrollbar />
          </AttrPane>
        </DesignArea>
      </Editor>

      <Rail $right>
        <RailTab $right $pt={8}>
          <RailText $right>Gradle</RailText>
          <MdPets size={12} />
        </RailTab>
        <RailTab $right $mt={14}>
          <RailText $right>Layout Validation</RailText>
          <MdSmartphone size={12} />
        </RailTab>
      </Rail>
    </Body>

    <RedCircle width="1280" height="548" viewBox="0 0 1280 548">
      <path
        d="M386 385C394 382 404 385 410 392C416 399 419 407 418 416C417 426 410 434 402 437C392 440 380 437 369 437C367 430 368 424 371 418C375 410 378 402 380 394C381 390 383 387 386 385Z"
        fill="none"
        stroke="#e01010"
        strokeWidth="3"
      />
    </RedCircle>
  </Root>
);

export default App;
